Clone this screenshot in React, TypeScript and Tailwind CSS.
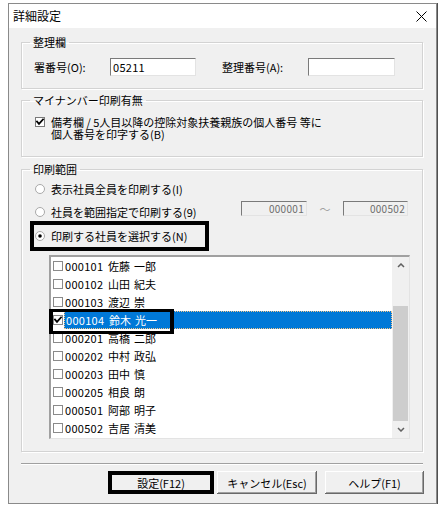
const rows: [string, string, string][] = [
  ["000101", "佐藤", "一郎"],
  ["000102", "山田", "紀夫"],
  ["000103", "渡辺", "崇"],
  ["000104", "鈴木", "光一"],
  ["000201", "高橋", "二郎"],
  ["000202", "中村", "政弘"],
  ["000203", "田中", "慎"],
  ["000205", "相良", "朗"],
  ["000501", "阿部", "明子"],
  ["000502", "吉居", "清美"],
];

function Radio({ checked }: { checked?: boolean }) {
  return (
    <svg width="10" height="10" viewBox="0 0 10 10" className="shrink-0">
      <circle cx="5" cy="5" r="4.5" fill="#ffffff" stroke="#a8a8a8" strokeWidth="1" />
      {checked && <circle cx="5" cy="5" r="1.8" fill="#000000" />}
    </svg>
  );
}

function Check({ checked, small }: { checked?: boolean; small?: boolean }) {
  return (
    <svg width="10" height="10" viewBox="0 0 10 10" className="shrink-0">
      <rect x="0.5" y="0.5" width="9" height="9" fill="#ffffff" stroke={small ? "#8a8a8a" : "#7a7a7a"} strokeWidth="1" />
      {checked && (
        <path d="M2 4.6 L4 6.8 L8 2.4" fill="none" stroke="#000000" strokeWidth="1.8" strokeLinecap="square" />
      )}
    </svg>
  );
}

function Group({ title, children, className }: { title: string; children: React.ReactNode; className?: string }) {
  return (
    <fieldset className={`w-[402px] border border-[#d3d3d3] shadow-[1px_1px_0_#ffffff,inset_1px_1px_0_#ffffff] ${className ?? ""}`}>
      <legend className="ml-[8px] px-[3px] text-[11px] leading-[14px] text-black">{title}</legend>
      {children}
    </fieldset>
  );
}

function Chevron({ up }: { up?: boolean }) {
  return (
    <svg width="8" height="5" viewBox="0 0 8 5">
      <path d={up ? "M1 4 L4 1 L7 4" : "M1 1 L4 4 L7 1"} fill="none" stroke="#606060" strokeWidth="1.5" />
    </svg>
  );
}

export default function App() {
  return (
    <div
      className="relative w-[440px] h-[507px] bg-white overflow-hidden text-black"
      style={{ fontFamily: '"Noto Sans CJK JP", "Noto Sans", sans-serif' }}
    >
      <div className="ml-[8px] mt-[3px] w-[429px] h-[501px] border border-[#8a8a8a] flex flex-col shadow-[1px_0_0_#505050]">
        {/* title bar */}
        <div className="h-[24px] bg-white flex items-center justify-between pl-[4px] pr-[9px]">
          <span className="text-[12px] leading-[14px]">詳細設定</span>
          <svg width="11" height="11" viewBox="0 0 11 11">
            <path d="M0.5 0.5 L10.5 10.5 M10.5 0.5 L0.5 10.5" stroke="#000" strokeWidth="1" />
          </svg>
        </div>
        {/* body */}
        <div className="flex-1 bg-[#f0f0f0] pt-[7px] pl-[12px] text-[11px] leading-[14px]">
          <Group title="整理欄" className="pt-[9px] pb-[12px]">
            <div className="flex items-center h-[18px] pl-[12px]">
              <span className="w-[76px]">署番号(O):</span>
              <div className="w-[86px] h-[18px] bg-white border border-t-[#7a7a7a] border-l-[#7a7a7a] border-b-[#e3e3e3] border-r-[#e3e3e3] pl-[2px] flex items-center tracking-[0.3px]">
                05211
              </div>
              <span className="ml-[26px] w-[86px]">整理番号(A):</span>
              <div className="w-[87px] h-[18px] bg-white border border-t-[#7a7a7a] border-l-[#7a7a7a] border-b-[#e3e3e3] border-r-[#e3e3e3]" />
            </div>
          </Group>

          <Group title="マイナンバー印刷有無" className="mt-[4px] pt-[9px] pb-[16px]">
            <div className="flex items-start pl-[13px]">
              <div className="mt-[1px]">
                <Check checked />
              </div>
              <div className="ml-[6px] leading-[12px]">
                <div>備考欄 / 5人目以降の控除対象扶養親族の個人番号 等に</div>
                <div>個人番号を印字する(B)</div>
              </div>
            </div>
          </Group>

          <Group title="印刷範囲" className="mt-[5px] pt-[4px] pb-[12px]">
            <div className="flex items-center h-[18px] pl-[13px]">
              <Radio />
              <span className="ml-[6px]">表示社員全員を印刷する(I)</span>
            </div>
            <div className="flex items-center h-[16px] mt-[6px] pl-[13px]">
              <div className="w-[206px] flex items-center">
                <Radio />
                <span className="ml-[6px]">社員を範囲指定で印刷する(9)</span>
              </div>
              <div className="self-start -mt-[3px] w-[66px] h-[15px] border border-t-[#7a7a7a] border-l-[#7a7a7a] border-b-[#e3e3e3] border-r-[#e3e3e3] flex items-center justify-end pr-[2px] text-[#6d6d6d] text-[10px] tracking-[0.3px]">
                000001
              </div>
              <span className="self-start -mt-[3px] w-[36px] h-[15px] flex items-center justify-center text-[#a0a0a0]">〜</span>
              <div className="self-start -mt-[3px] w-[65px] h-[15px] border border-t-[#7a7a7a] border-l-[#7a7a7a] border-b-[#e3e3e3] border-r-[#e3e3e3] flex items-center justify-end pr-[2px] text-[#6d6d6d] text-[10px] tracking-[0.3px]">
                000502
              </div>
            </div>
            <div className="mt-[1px] ml-[8px] w-[179px] h-[30px] border-[4px] border-black flex items-center pl-[1px]">
              <Radio checked />
              <span className="ml-[6px]">印刷する社員を選択する(N)</span>
            </div>

            {/* list box */}
            <div className="relative mt-[4px] ml-[27px] w-[361px] h-[184px] bg-white border-t-2 border-l-2 border-t-[#a0a0a0] border-l-[#a0a0a0] border-r border-b border-r-[#e3e3e3] border-b-[#e3e3e3] flex">
              <div className="flex-1 flex flex-col">
                {rows.map(([code, sei, mei], i) => {
                  const sel = i === 3;
                  return (
                    <div key={code} className="h-[18px] flex items-center pl-[2px]">
                      <Check checked={sel} small />
                      <div
                        className={`ml-[1px] flex-1 h-[18px] flex items-center pl-[1px] ${
                          sel ? "bg-[#0078d7] text-white border border-dotted border-[#f2c48a]" : ""
                        }`}
                      >
                        <span className="w-[43px] tracking-[0.3px]">{code}</span>
                        <span className="w-[26px]">{sei}</span>
                        <span>{mei}</span>
                      </div>
                    </div>
                  );
                })}
              </div>
              {/* scrollbar */}
              <div className="w-[17px] bg-[#f0f0f0] flex flex-col items-center">
                <div className="h-[17px] w-full flex items-center justify-center">
                  <Chevron up />
                </div>
                <div className="mt-[32px] h-[115px] w-[15px] bg-[#cdcdcd]" />
                <div className="flex-1" />
                <div className="h-[17px] w-full flex items-center justify-center">
                  <Chevron />
                </div>
              </div>
              {/* annotation box */}
              <div className="absolute left-[-2px] top-[52px] w-[125px] h-[25px] border-x-[4px] border-y-[3px] border-black" />
            </div>
          </Group>

          {/* separator */}
          <div className="mt-[11px] w-[402px] h-[2px] border-t border-t-[#a0a0a0] border-b border-b-white" />

          {/* buttons */}
          <div className="mt-[6px] flex h-[23px]">
            <button className="ml-[87px] w-[106px] h-[23px] border-[4px] border-black bg-[#f0f0f0] flex items-center justify-center">
              設定(F12)
            </button>
            <button className="ml-[3px] w-[100px] h-[23px] bg-[#f0f0f0] shadow-[inset_-1px_-1px_0_#696969,inset_1px_1px_0_#ffffff,inset_-2px_-2px_0_#a0a0a0] flex items-center justify-center">
              キャンセル(Esc)
            </button>
            <button className="ml-[8px] w-[99px] h-[23px] bg-[#f0f0f0] shadow-[inset_-1px_-1px_0_#696969,inset_1px_1px_0_#ffffff,inset_-2px_-2px_0_#a0a0a0] flex items-center justify-center">
              ヘルプ(F1)
            </button>
          </div>
        </div>
      </div>
    </div>
  );
}
